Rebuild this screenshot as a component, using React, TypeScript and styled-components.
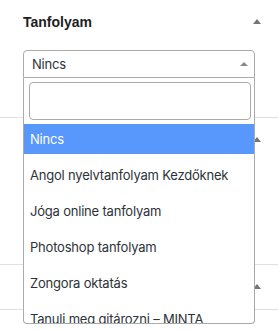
import * as React from 'react';
import styled, { createGlobalStyle } from 'styled-components';

const GlobalStyle = createGlobalStyle`
  body {
    margin: 0;
    background: #fff;
    font-family: "Liberation Sans", Arial, sans-serif;
    color: #2c3338;
  }
`;

const Sidebar = styled.div`
  width: 278px;
  height: 330px;
  overflow: hidden;
`;

const Panel = styled.section`
  border-bottom: 1px solid #e0e0e0;
`;

const PanelHeader = styled.div`
  display: flex;
  align-items: center;
  justify-content: space-between;
  height: 44px;
  padding: 0 17px 0 23px;
`;

const PanelTitle = styled.h2`
  margin: 0;
  font-size: 14px;
  font-weight: 700;
  color: #1e1e1e;
`;

const Toggle = styled.span`
  width: 0;
  height: 0;
  margin-top: -1px;
  border-left: 4.5px solid transparent;
  border-right: 4.5px solid transparent;
  border-bottom: 5px solid #757575;
`;

const PanelBody = styled.div<{ $height: number }>`
  height: ${(p) => p.$height}px;
  padding: 0 23px;
`;

const SelectWrap = styled.div`
  position: relative;
  margin-top: 6px;
  font-family: Inter, "Liberation Sans", sans-serif;
  letter-spacing: -0.2px;
`;

const Selection = styled.div`
  display: flex;
  align-items: center;
  justify-content: space-between;
  box-sizing: border-box;
  height: 28px;
  padding: 0 6px 0 8px;
  border: 1px solid #aaa;
  border-radius: 4px 4px 0 0;
  font-size: 13px;
  color: #2c3338;
`;

const Arrow = styled.span`
  width: 0;
  height: 0;
  border-left: 4px solid transparent;
  border-right: 4px solid transparent;
  border-bottom: 4px solid #888;
`;

const Dropdown = styled.div`
  position: absolute;
  top: 100%;
  left: 0;
  right: 0;
  z-index: 10;
  background: #fff;
  border: 1px solid #aaa;
  border-top: none;
  border-radius: 0 0 4px 4px;
`;

const SearchBox = styled.div`
  padding: 4px 3px 4px 5px;
`;

const SearchInput = styled.input`
  display: block;
  box-sizing: border-box;
  width: 100%;
  height: 38px;
  border: 1px solid #aaa;
  border-radius: 4px;
  outline: none;
  font: inherit;
`;

const Results = styled.ul`
  list-style: none;
  margin: 0;
  padding: 0;
  height: 199px;
  overflow: hidden;
`;

const Option = styled.li<{ $active?: boolean }>`
  display: flex;
  align-items: center;
  height: 30px;
  margin-bottom: 6px;
  padding: 0 6px;
  font-size: 13px;
  white-space: nowrap;
  color: ${(p) => (p.$active ? '#fff' : '#2c3338')};
  background: ${(p) => (p.$active ? '#5897fb' : 'transparent')};
`;

const options = [
  'Nincs',
  'Angol nyelvtanfolyam Kezdőknek',
  'Jóga online tanfolyam',
  'Photoshop tanfolyam',
  'Zongora oktatás',
  'Tanulj meg gitározni – MINTA',
];

const App: React.FC = (): JSX.Element => (
  <>
    <GlobalStyle />
    <Sidebar>
      <Panel>
        <PanelHeader>
          <PanelTitle>Tanfolyam</PanelTitle>
          <Toggle />
        </PanelHeader>
        <PanelBody $height={67}>
          <SelectWrap>
            <Selection>
              <span>Nincs</span>
              <Arrow />
            </Selection>
            <Dropdown>
              <SearchBox>
                <SearchInput type="search" />
              </SearchBox>
              <Results>
                {options.map((o, i) => (
                  <Option key={o} $active={i === 0}>
                    {o}
                  </Option>
                ))}
              </Results>
            </Dropdown>
          </SelectWrap>
        </PanelBody>
      </Panel>

      <Panel>
        <PanelHeader>
          <span />
          <Toggle />
        </PanelHeader>
        <PanelBody $height={102} />
      </Panel>

      <Panel>
        <PanelHeader>
          <span />
          <Toggle />
        </PanelHeader>
      </Panel>
    </Sidebar>
  </>
);

export default App;
